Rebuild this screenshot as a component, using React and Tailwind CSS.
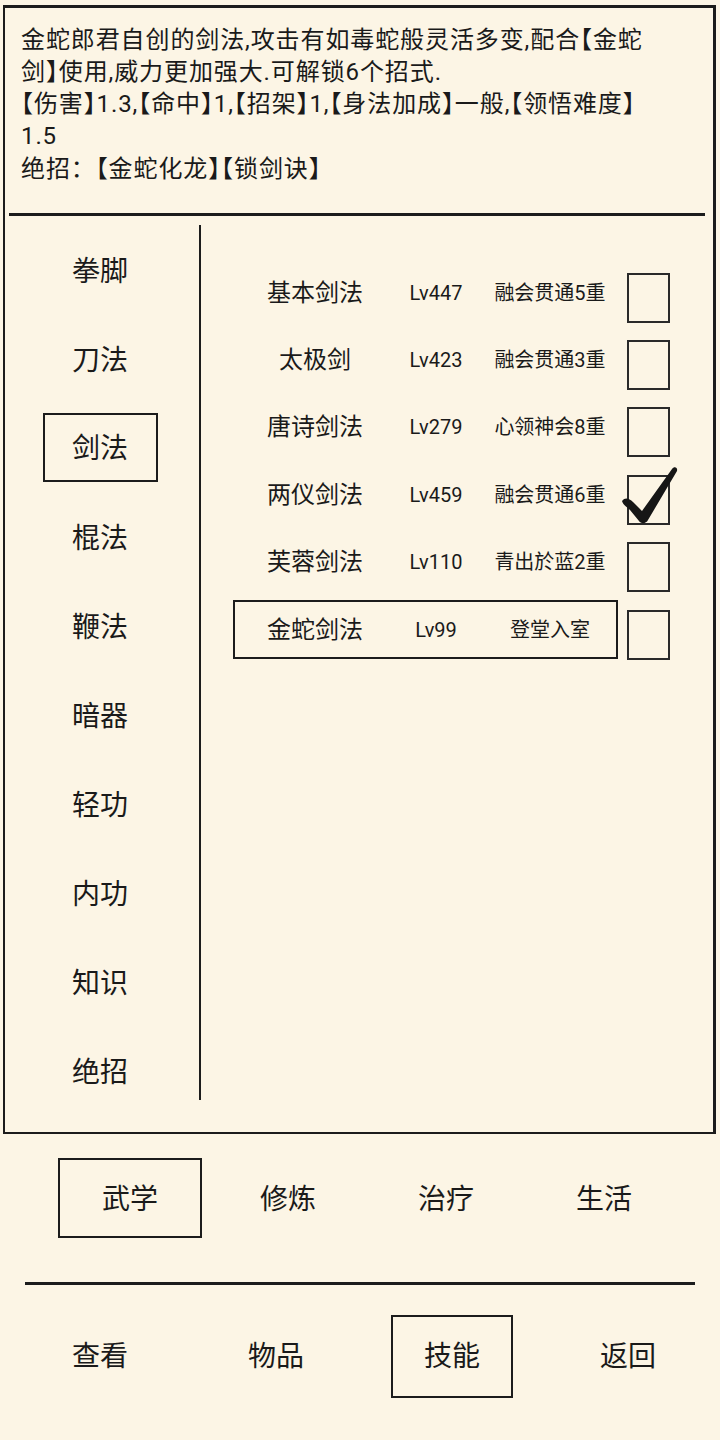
const categories = ["拳脚", "刀法", "剑法", "棍法", "鞭法", "暗器", "轻功", "内功", "知识", "绝招"];

const skills = [
  { name: "基本剑法", lv: "Lv447", rank: "融会贯通5重" },
  { name: "太极剑", lv: "Lv423", rank: "融会贯通3重" },
  { name: "唐诗剑法", lv: "Lv279", rank: "心领神会8重" },
  { name: "两仪剑法", lv: "Lv459", rank: "融会贯通6重", checked: true },
  { name: "芙蓉剑法", lv: "Lv110", rank: "青出於蓝2重" },
  { name: "金蛇剑法", lv: "Lv99", rank: "登堂入室", active: true },
];

const tabs = ["武学", "修炼", "治疗", "生活"];
const navs = ["查看", "物品", "技能", "返回"];

function CheckMark() {
  return (
    <svg
      className="absolute left-[-12px] top-[-12px] w-[65px] h-[65px] overflow-visible"
      viewBox="0 0 65 65"
    >
      <path
        d="M5 36 C8 32 12 33 16 37 L25 46 L55 4 C57 1 61 2 60 6 L31 55 C29 59 24 59 22 56 L13 45 C9 41 6 40 5 36 Z"
        fill="#161616"
      />
    </svg>
  );
}

function SkillRow({ skill }) {
  return (
    <div className="h-[67.4px] flex items-center">
      <div
        className={
          "w-[385px] h-[59px] shrink-0 flex items-center border-2 " +
          (skill.active ? "border-[#1c1c1c]" : "border-transparent")
        }
      >
        <div className="w-[160px] shrink-0 text-center text-[24px]">{skill.name}</div>
        <div className="w-[82px] shrink-0 text-center text-[20px]">{skill.lv}</div>
        <div className="w-[146px] shrink-0 text-center text-[20px] whitespace-nowrap">{skill.rank}</div>
      </div>
      <div className="relative ml-[9px] mt-[10px] w-[43px] h-[50px] shrink-0 border-2 border-[#2a2a2a]">
        {skill.checked && <CheckMark />}
      </div>
    </div>
  );
}

export default function App() {
  return (
    <div className="w-[720px] h-[1440px] bg-[#fcf5e5] text-[#1a1a1a] font-[family-name:Roboto,'Noto_Sans_CJK_SC',sans-serif] overflow-hidden flex flex-col">
      {/* main panel */}
      <div className="mt-[5px] ml-[3px] w-[713px] h-[1129px] shrink-0 border-2 border-t-[3px] border-r-[3px] border-[#1c1c1c] flex flex-col">
        <div className="pl-[16px] pt-[16px] text-[24px] leading-[32px] tracking-[0.9px] whitespace-nowrap [font-feature-settings:'halt']">
          <div>金蛇郎君自创的剑法,攻击有如毒蛇般灵活多变,配合【金蛇</div>
          <div>剑】使用,威力更加强大.可解锁6个招式.</div>
          <div>【伤害】1.3,【命中】1,【招架】1,【身法加成】一般,【领悟难度】</div>
          <div>1.5</div>
          <div className="pt-[1px]">
            绝招<span className="[font-feature-settings:normal]">：</span>【金蛇化龙】【锁剑诀】
          </div>
        </div>
        <div className="mt-[28px] ml-[4px] w-[696px] h-[3px] bg-[#1c1c1c]" />

        <div className="flex flex-1">
          {/* category list */}
          <div className="w-[190px] shrink-0 pt-[11px] flex flex-col">
            {categories.map((c) => (
              <div key={c} className="h-[89px] flex items-center justify-center">
                {c === "剑法" ? (
                  <div className="w-[115px] h-[69px] border-2 border-[#1c1c1c] flex items-center justify-center text-[28px] -mt-[5px] pt-[3px]">
                    {c}
                  </div>
                ) : (
                  <span className="text-[28px]">{c}</span>
                )}
              </div>
            ))}
          </div>
          <div className="ml-[4px] mt-[9px] w-[2px] h-[875px] bg-[#1c1c1c]" />

          {/* skill list */}
          <div className="pl-[32px] pt-[43px] flex flex-col">
            {skills.map((s) => (
              <SkillRow key={s.name} skill={s} />
            ))}
          </div>
        </div>
      </div>

      {/* sub tabs */}
      <div className="mt-[24px] h-[80px] pl-[51px] flex">
        {tabs.map((t, i) => (
          <div key={t} className="w-[158px] flex items-center justify-center pt-[3px]">
            {i === 0 ? (
              <div className="w-[144px] h-[80px] -mt-[3px] border-2 border-[#1c1c1c] flex items-center justify-center text-[28px] pt-[3px]">
                {t}
              </div>
            ) : (
              <span className="text-[28px]">{t}</span>
            )}
          </div>
        ))}
      </div>

      <div className="mt-[44px] ml-[25px] w-[670px] h-[3px] bg-[#1c1c1c]" />

      {/* bottom navigation */}
      <div className="mt-[30px] h-[83px] pl-[12px] flex">
        {navs.map((n) => (
          <div key={n} className="w-[176px] flex items-center justify-center">
            {n === "技能" ? (
              <div className="w-[122px] h-[83px] border-2 border-[#1c1c1c] flex items-center justify-center text-[28px]">
                {n}
              </div>
            ) : (
              <span className="text-[28px]">{n}</span>
            )}
          </div>
        ))}
      </div>
    </div>
  );
}
